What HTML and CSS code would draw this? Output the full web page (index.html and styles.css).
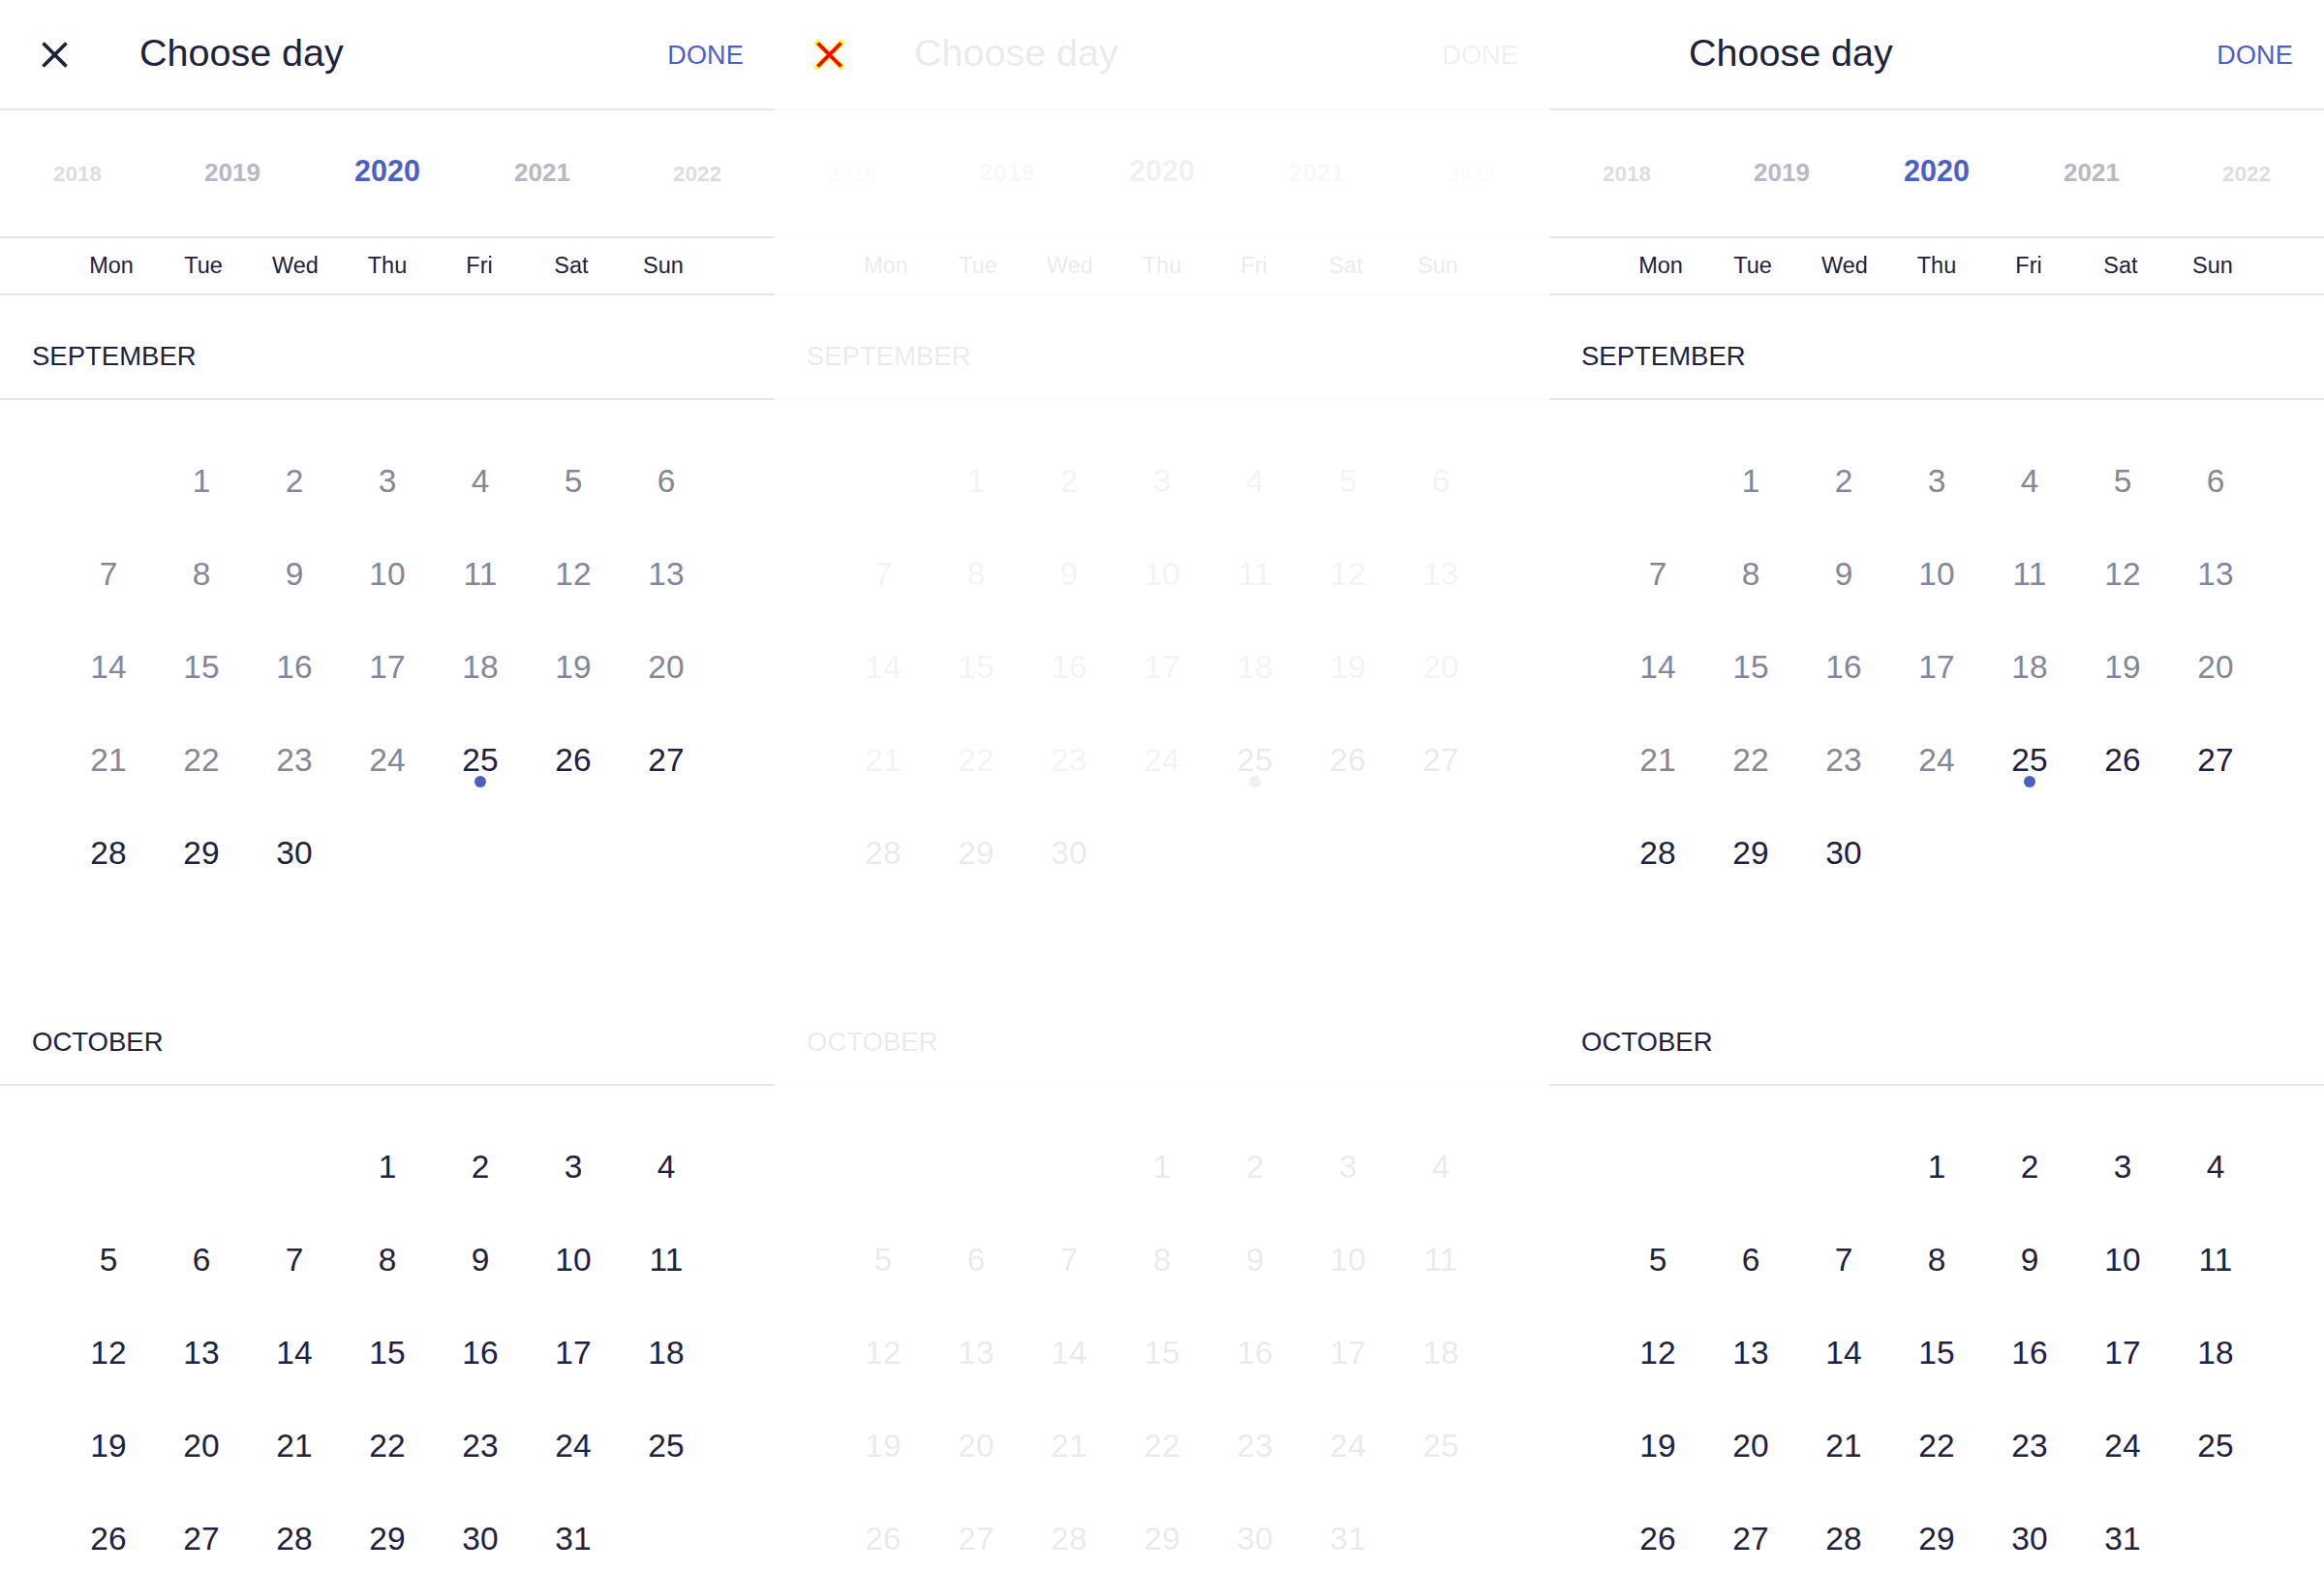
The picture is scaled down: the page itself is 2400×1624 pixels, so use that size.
FILE: index.html
```html
<!DOCTYPE html>
<html lang="en">
<head>
<meta charset="utf-8">
<title>Choose day</title>
<link rel="stylesheet" href="styles.css">
</head>
<body>
<div class="screens">

  <!-- Screen 1 -->
  <section class="screen">
    <header class="topbar">
      <span class="close">
        <svg viewBox="0 0 27 27" width="27" height="27"><path d="M1.5 1.5 L25.5 25.5 M25.5 1.5 L1.5 25.5" stroke="#1e2140" stroke-width="3.8" fill="none"/></svg>
      </span>
      <h1 class="title">Choose day</h1>
      <span class="done">DONE</span>
    </header>
    <div class="years">
      <span class="year year--far">2018</span>
      <span class="year year--near">2019</span>
      <span class="year year--current">2020</span>
      <span class="year year--near">2021</span>
      <span class="year year--far">2022</span>
    </div>
    <div class="weekdays">
      <span>Mon</span><span>Tue</span><span>Wed</span><span>Thu</span><span>Fri</span><span>Sat</span><span>Sun</span>
    </div>
    <div class="month-head">SEPTEMBER</div>
    <div class="days">
      <span class="day"></span>
      <span class="day muted">1</span><span class="day muted">2</span><span class="day muted">3</span><span class="day muted">4</span><span class="day muted">5</span><span class="day muted">6</span>
      <span class="day muted">7</span><span class="day muted">8</span><span class="day muted">9</span><span class="day muted">10</span><span class="day muted">11</span><span class="day muted">12</span><span class="day muted">13</span>
      <span class="day muted">14</span><span class="day muted">15</span><span class="day muted">16</span><span class="day muted">17</span><span class="day muted">18</span><span class="day muted">19</span><span class="day muted">20</span>
      <span class="day muted">21</span><span class="day muted">22</span><span class="day muted">23</span><span class="day muted">24</span><span class="day today">25</span><span class="day">26</span><span class="day">27</span>
      <span class="day">28</span><span class="day">29</span><span class="day">30</span>
    </div>
    <div class="month-head">OCTOBER</div>
    <div class="days">
      <span class="day"></span><span class="day"></span><span class="day"></span>
      <span class="day">1</span><span class="day">2</span><span class="day">3</span><span class="day">4</span>
      <span class="day">5</span><span class="day">6</span><span class="day">7</span><span class="day">8</span><span class="day">9</span><span class="day">10</span><span class="day">11</span>
      <span class="day">12</span><span class="day">13</span><span class="day">14</span><span class="day">15</span><span class="day">16</span><span class="day">17</span><span class="day">18</span>
      <span class="day">19</span><span class="day">20</span><span class="day">21</span><span class="day">22</span><span class="day">23</span><span class="day">24</span><span class="day">25</span>
      <span class="day">26</span><span class="day">27</span><span class="day">28</span><span class="day">29</span><span class="day">30</span><span class="day">31</span>
    </div>
  </section>

  <!-- Screen 2 (faded, close icon highlighted) -->
  <section class="screen screen--ghost">
    <header class="topbar">
      <span class="close">
        <svg viewBox="0 0 27 27" width="27" height="27">
          <path d="M1.5 1.5 L25.5 25.5 M25.5 1.5 L1.5 25.5" stroke="#ffff00" stroke-width="5.6" stroke-linecap="square" fill="none"/>
          <path d="M1.5 1.5 L25.5 25.5 M25.5 1.5 L1.5 25.5" stroke="#ff0000" stroke-width="3.8" fill="none"/>
        </svg>
      </span>
      <h1 class="title">Choose day</h1>
      <span class="done">DONE</span>
    </header>
    <div class="years">
      <span class="year year--far">2018</span>
      <span class="year year--near">2019</span>
      <span class="year year--current">2020</span>
      <span class="year year--near">2021</span>
      <span class="year year--far">2022</span>
    </div>
    <div class="weekdays">
      <span>Mon</span><span>Tue</span><span>Wed</span><span>Thu</span><span>Fri</span><span>Sat</span><span>Sun</span>
    </div>
    <div class="month-head">SEPTEMBER</div>
    <div class="days">
      <span class="day"></span>
      <span class="day muted">1</span><span class="day muted">2</span><span class="day muted">3</span><span class="day muted">4</span><span class="day muted">5</span><span class="day muted">6</span>
      <span class="day muted">7</span><span class="day muted">8</span><span class="day muted">9</span><span class="day muted">10</span><span class="day muted">11</span><span class="day muted">12</span><span class="day muted">13</span>
      <span class="day muted">14</span><span class="day muted">15</span><span class="day muted">16</span><span class="day muted">17</span><span class="day muted">18</span><span class="day muted">19</span><span class="day muted">20</span>
      <span class="day muted">21</span><span class="day muted">22</span><span class="day muted">23</span><span class="day muted">24</span><span class="day today">25</span><span class="day">26</span><span class="day">27</span>
      <span class="day">28</span><span class="day">29</span><span class="day">30</span>
    </div>
    <div class="month-head">OCTOBER</div>
    <div class="days">
      <span class="day"></span><span class="day"></span><span class="day"></span>
      <span class="day">1</span><span class="day">2</span><span class="day">3</span><span class="day">4</span>
      <span class="day">5</span><span class="day">6</span><span class="day">7</span><span class="day">8</span><span class="day">9</span><span class="day">10</span><span class="day">11</span>
      <span class="day">12</span><span class="day">13</span><span class="day">14</span><span class="day">15</span><span class="day">16</span><span class="day">17</span><span class="day">18</span>
      <span class="day">19</span><span class="day">20</span><span class="day">21</span><span class="day">22</span><span class="day">23</span><span class="day">24</span><span class="day">25</span>
      <span class="day">26</span><span class="day">27</span><span class="day">28</span><span class="day">29</span><span class="day">30</span><span class="day">31</span>
    </div>
  </section>

  <!-- Screen 3 (no close icon) -->
  <section class="screen">
    <header class="topbar">
      <span class="close"></span>
      <h1 class="title">Choose day</h1>
      <span class="done">DONE</span>
    </header>
    <div class="years">
      <span class="year year--far">2018</span>
      <span class="year year--near">2019</span>
      <span class="year year--current">2020</span>
      <span class="year year--near">2021</span>
      <span class="year year--far">2022</span>
    </div>
    <div class="weekdays">
      <span>Mon</span><span>Tue</span><span>Wed</span><span>Thu</span><span>Fri</span><span>Sat</span><span>Sun</span>
    </div>
    <div class="month-head">SEPTEMBER</div>
    <div class="days">
      <span class="day"></span>
      <span class="day muted">1</span><span class="day muted">2</span><span class="day muted">3</span><span class="day muted">4</span><span class="day muted">5</span><span class="day muted">6</span>
      <span class="day muted">7</span><span class="day muted">8</span><span class="day muted">9</span><span class="day muted">10</span><span class="day muted">11</span><span class="day muted">12</span><span class="day muted">13</span>
      <span class="day muted">14</span><span class="day muted">15</span><span class="day muted">16</span><span class="day muted">17</span><span class="day muted">18</span><span class="day muted">19</span><span class="day muted">20</span>
      <span class="day muted">21</span><span class="day muted">22</span><span class="day muted">23</span><span class="day muted">24</span><span class="day today">25</span><span class="day">26</span><span class="day">27</span>
      <span class="day">28</span><span class="day">29</span><span class="day">30</span>
    </div>
    <div class="month-head">OCTOBER</div>
    <div class="days">
      <span class="day"></span><span class="day"></span><span class="day"></span>
      <span class="day">1</span><span class="day">2</span><span class="day">3</span><span class="day">4</span>
      <span class="day">5</span><span class="day">6</span><span class="day">7</span><span class="day">8</span><span class="day">9</span><span class="day">10</span><span class="day">11</span>
      <span class="day">12</span><span class="day">13</span><span class="day">14</span><span class="day">15</span><span class="day">16</span><span class="day">17</span><span class="day">18</span>
      <span class="day">19</span><span class="day">20</span><span class="day">21</span><span class="day">22</span><span class="day">23</span><span class="day">24</span><span class="day">25</span>
      <span class="day">26</span><span class="day">27</span><span class="day">28</span><span class="day">29</span><span class="day">30</span><span class="day">31</span>
    </div>
  </section>

</div>
</body>
</html>
```

FILE: styles.css
```css
* {
  box-sizing: border-box;
  margin: 0;
  padding: 0;
}

body {
  margin: 0;
  background: #ffffff;
  color: #1e2140;
  font-family: "Liberation Sans", Arial, sans-serif;
}

.screens {
  display: flex;
  width: 2400px;
  height: 1624px;
  overflow: hidden;
}

.screen {
  flex: 0 0 800px;
  width: 800px;
  height: 1624px;
  overflow: hidden;
  background: #ffffff;
}

/* Top bar */
.topbar {
  height: 114px;
  display: flex;
  align-items: center;
  padding: 0 32px 0 43px;
  border-bottom: 2px solid #e6e6e8;
}

.close {
  flex: none;
  width: 27px;
  height: 27px;
  display: flex;
}

.close svg {
  display: block;
  overflow: visible;
}

.title {
  flex: 1;
  margin-left: 74px;
  margin-bottom: 3px;
  font-size: 39.5px;
  font-weight: 400;
  color: #1e2140;
}

.done {
  margin-top: 2px;
  font-size: 27px;
  color: #4b60c4;
  letter-spacing: 0.2px;
}

/* Year selector */
.years {
  height: 132px;
  display: flex;
  align-items: baseline;
  padding-top: 45px;
  border-bottom: 2px solid #e6e6e8;
}

.year {
  flex: 0 0 160px;
  text-align: center;
  font-weight: 700;
}

.year--far {
  font-size: 22.5px;
  color: #dcdde3;
}

.year--near {
  font-size: 26px;
  color: #b8b9c4;
}

.year--current {
  font-size: 30.5px;
  color: #4b60c4;
}

/* Weekday header */
.weekdays {
  height: 59px;
  display: grid;
  grid-template-columns: repeat(7, 95px);
  justify-content: center;
  align-items: center;
  text-align: center;
  font-size: 23.5px;
  color: #1e2140;
  border-bottom: 2px solid #e6e6e8;
}

/* Month sections */
.month-head {
  height: 108px;
  padding: 43px 0 0 33px;
  font-size: 27.5px;
  line-height: 40px;
  color: #1e2140;
  border-bottom: 2px solid #e6e6e8;
}

.days {
  display: grid;
  grid-template-columns: repeat(7, 96px);
  grid-auto-rows: 96px;
  justify-content: center;
  padding: 36px 0 84px;
  font-size: 33.5px;
  color: #1e2140;
}

.day {
  position: relative;
  display: flex;
  align-items: center;
  justify-content: center;
}

.day.muted {
  color: #858799;
}

.day.today::after {
  content: "";
  position: absolute;
  left: 42px;
  top: 64px;
  width: 12px;
  height: 12px;
  border-radius: 50%;
  background: #4b60c4;
}

/* Faded middle screen */
.screen--ghost .title,
.screen--ghost .done,
.screen--ghost .years,
.screen--ghost .weekdays,
.screen--ghost .month-head,
.screen--ghost .days {
  opacity: 0.09;
  filter: grayscale(1);
}

.screen--ghost .topbar {
  border-bottom-color: #fbfbfb;
}
```
